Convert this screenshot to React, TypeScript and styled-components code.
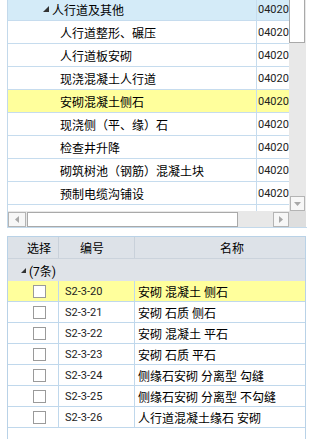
import React from 'react';
import styled, { createGlobalStyle } from 'styled-components';

const GlobalStyle = createGlobalStyle`
  html, body {
    margin: 0;
    padding: 0;
    background: #ffffff;
  }

  body {
    font-family: Roboto, "Noto Sans CJK SC", sans-serif;
    font-size: 12px;
    color: #000000;
  }
`;

const Page = styled.div`
  width: 311px;
  height: 439px;
  overflow: hidden;
  box-sizing: border-box;
  padding-left: 7px;
  display: flex;
  flex-direction: column;
  gap: 8px;
`;

/* ---------- top tree panel ---------- */

const TreePanel = styled.div`
  width: 299px;
  flex: none;
  display: grid;
  grid-template-columns: 281px 17px;
  grid-template-rows: 211px 16px;
  border-left: 1px solid #c3d9eb;
  border-bottom: 1px solid #c3d9eb;
`;

const TreeViewport = styled.div`
  overflow: hidden;
`;

const TreeList = styled.div`
  margin-top: -2px;
`;

const TreeRow = styled.div<{ $tone?: 'group' | 'selected' }>`
  display: flex;
  height: 22px;
  border-bottom: 1px solid #c6dcee;
  background: ${p =>
    p.$tone === 'group' ? '#d4ebf8' : p.$tone === 'selected' ? '#ffff9c' : '#ffffff'};
`;

const TreeName = styled.div<{ $indent: number }>`
  box-sizing: border-box;
  width: 249px;
  flex: none;
  display: flex;
  align-items: center;
  gap: 3px;
  padding-left: ${p => p.$indent}px;
  border-right: 1px solid #c6dcee;
  white-space: nowrap;
`;

const TreeCode = styled.div`
  flex: 1;
  display: flex;
  align-items: center;
  padding-left: 1px;
  font-size: 11px;
  color: #222;
  overflow: hidden;
  white-space: nowrap;
`;

const VScroll = styled.div`
  background: #e8e8e8;
  display: flex;
  flex-direction: column;
  justify-content: space-between;
`;

const VThumb = styled.div`
  box-sizing: border-box;
  width: 16px;
  height: 43px;
  background: #ffffff;
  border: 1px solid #a9a9a9;
  border-top: none;
`;

const ScrollButton = styled.div<{ $w: number }>`
  box-sizing: border-box;
  width: ${p => p.$w}px;
  height: 15px;
  flex: none;
  display: flex;
  align-items: center;
  justify-content: center;
  background: #f7f7f7;
  border: 1px solid #b4b4b4;
`;

const DownButton = styled(ScrollButton)`
  margin-left: 1px;
`;

const HScroll = styled.div`
  background: #e8e8e8;
  display: flex;
  align-items: center;
`;

const HThumb = styled.div`
  box-sizing: border-box;
  width: 211px;
  height: 15px;
  margin-left: 1px;
  background: #ffffff;
  border: 1px solid #a9a9a9;
`;

const HGap = styled.div`
  flex: 1;
`;

const Corner = styled.div`
  background: #dedede;
`;

/* ---------- bottom grid ---------- */

const Table = styled.div`
  box-sizing: border-box;
  width: 299px;
  flex: 1;
  border: 1px solid #b9d2e7;
  border-bottom: none;
  display: flex;
  flex-direction: column;
`;

const HeadRow = styled.div`
  display: grid;
  grid-template-columns: 51px 76px 1fr;
  height: 22px;
  box-sizing: border-box;
  background: #dde2e8;
  border-bottom: 1px solid #cbd3dc;
`;

const HeadCell = styled.div<{ $pad: number; $center?: boolean }>`
  box-sizing: border-box;
  display: flex;
  align-items: center;
  justify-content: ${p => (p.$center ? 'center' : 'flex-start')};
  padding-left: ${p => p.$pad}px;
  border-right: 1px solid #c9d1da;

  &:last-child {
    border-right: none;
  }
`;

const GroupRow = styled.div`
  height: 22px;
  display: flex;
  align-items: center;
  gap: 3px;
  padding-left: 13px;
  background: #dfe3e8;
`;

const DataRow = styled.div<{ $selected?: boolean }>`
  display: grid;
  grid-template-columns: 51px 76px 1fr;
  height: 21px;
  box-sizing: border-box;
  border-bottom: 1px solid #c0d8ec;
  background: ${p => (p.$selected ? '#ffff9c' : '#ffffff')};
`;

const DataCell = styled.div<{ $pad: number; $center?: boolean; $code?: boolean }>`
  box-sizing: border-box;
  display: flex;
  align-items: center;
  justify-content: ${p => (p.$center ? 'center' : 'flex-start')};
  padding-left: ${p => p.$pad}px;
  border-right: 1px solid #c0d8ec;
  font-size: ${p => (p.$code ? '11px' : '12px')};
  color: ${p => (p.$code ? '#222' : '#000')};
  white-space: nowrap;

  &:last-child {
    border-right: none;
  }
`;

const CheckBox = styled.div`
  box-sizing: border-box;
  width: 13px;
  height: 13px;
  background: #ffffff;
  border: 1px solid #9a9a9a;
`;

function Expander({ size }: { size: number }) {
  return (
    <svg width={size} height={size} viewBox="0 0 6 6">
      <polygon points="6,0 6,6 0,6" fill="#333" />
    </svg>
  );
}

function Arrow({ dir }: { dir: 'down' | 'left' | 'right' }) {
  const pts = {
    down: '0,0 7,0 3.5,4',
    left: '4,0 4,7 0,3.5',
    right: '0,0 0,7 4,3.5',
  }[dir];
  const w = dir === 'down' ? 7 : 4;
  const h = dir === 'down' ? 4 : 7;
  return (
    <svg width={w} height={h} viewBox={`0 0 ${w} ${h}`}>
      <polygon points={pts} fill="#a8a8a8" />
    </svg>
  );
}

const treeItems = [
  { name: '人行道整形、碾压' },
  { name: '人行道板安砌' },
  { name: '现浇混凝土人行道' },
  { name: '安砌混凝土侧石', selected: true },
  { name: '现浇侧（平、缘）石' },
  { name: '检查井升降' },
  { name: '砌筑树池（钢筋）混凝土块' },
  { name: '预制电缆沟铺设' },
  { name: '' },
];

const rows = [
  { code: 'S2-3-20', name: '安砌 混凝土 侧石', selected: true },
  { code: 'S2-3-21', name: '安砌 石质 侧石' },
  { code: 'S2-3-22', name: '安砌 混凝土 平石' },
  { code: 'S2-3-23', name: '安砌 石质 平石' },
  { code: 'S2-3-24', name: '侧缘石安砌 分离型 勾缝' },
  { code: 'S2-3-25', name: '侧缘石安砌 分离型 不勾缝' },
  { code: 'S2-3-26', name: '人行道混凝土缘石 安砌' },
];

export default function App() {
  return (
    <>
      <GlobalStyle />
      <Page>
        <TreePanel>
          <TreeViewport>
            <TreeList>
              <TreeRow $tone="group">
                <TreeName $indent={35}>
                  <Expander size={6} />
                  人行道及其他
                </TreeName>
                <TreeCode>04020</TreeCode>
              </TreeRow>
              {treeItems.map((item, i) => (
                <TreeRow key={i} $tone={item.selected ? 'selected' : undefined}>
                  <TreeName $indent={52}>{item.name}</TreeName>
                  <TreeCode>{item.name ? '04020' : ''}</TreeCode>
                </TreeRow>
              ))}
            </TreeList>
          </TreeViewport>
          <VScroll>
            <VThumb />
            <DownButton $w={15}>
              <Arrow dir="down" />
            </DownButton>
          </VScroll>
          <HScroll>
            <ScrollButton $w={18}>
              <Arrow dir="left" />
            </ScrollButton>
            <HThumb />
            <HGap />
            <ScrollButton $w={16}>
              <Arrow dir="right" />
            </ScrollButton>
          </HScroll>
          <Corner />
        </TreePanel>

        <Table>
          <HeadRow>
            <HeadCell $pad={12} $center>选择</HeadCell>
            <HeadCell $pad={21}>编号</HeadCell>
            <HeadCell $pad={85}>名称</HeadCell>
          </HeadRow>
          <GroupRow>
            <Expander size={5} />
            (7条)
          </GroupRow>
          {rows.map(r => (
            <DataRow key={r.code} $selected={r.selected}>
              <DataCell $pad={12} $center>
                <CheckBox />
              </DataCell>
              <DataCell $pad={6} $code>
                {r.code}
              </DataCell>
              <DataCell $pad={3}>{r.name}</DataCell>
            </DataRow>
          ))}
        </Table>
      </Page>
    </>
  );
}
